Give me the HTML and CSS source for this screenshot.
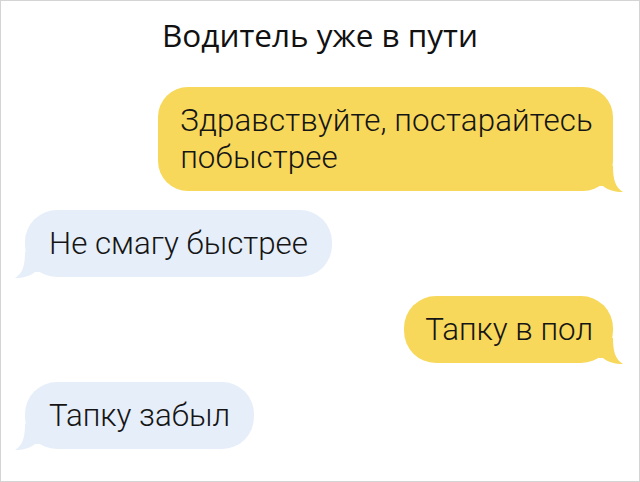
FILE: index.html
```html
<!DOCTYPE html>
<html lang="ru">
<head>
<meta charset="utf-8">
<link rel="stylesheet" href="styles.css">
</head>
<body>
<div class="frame">
  <h1 class="title">Водитель уже в пути</h1>
  <div class="chat">
    <div class="msg msg--out msg--wide">Здравствуйте, постарайтесь<br>побыстрее</div>
    <div class="msg msg--in">Не смагу быстрее</div>
    <div class="msg msg--out">Тапку в пол</div>
    <div class="msg msg--in">Тапку забыл</div>
  </div>
</div>
</body>
</html>
```
FILE: styles.css
```css
html, body {
  margin: 0;
  padding: 0;
  background: #fff;
}
.frame {
  box-sizing: border-box;
  width: 640px;
  height: 482px;
  border: 1px solid #d4d4d4;
  display: flex;
  flex-direction: column;
  overflow: hidden;
}
.title {
  margin: 0;
  padding-top: 13px;
  text-align: center;
  font-family: "Open Sans", sans-serif;
  font-weight: 500;
  font-size: 31.5px;
  line-height: 42px;
  color: #111;
}
.chat {
  display: flex;
  flex-direction: column;
  gap: 19px;
  padding: 31px 26px 0 24px;
}
.msg {
  position: relative;
  font-family: Roboto, sans-serif;
  font-weight: 300;
  font-size: 31.3px;
  line-height: 37px;
  color: #151515;
  padding: 15px 20px 15px 21px;
  border-radius: 32px;
}
.msg--out {
  align-self: flex-end;
  background: #f7d85b;
}
.msg--wide {
  padding-left: 22px;
  letter-spacing: 0.12px;
  border-radius: 30px;
}
.msg--in {
  align-self: flex-start;
  background: #e6eef9;
  padding-left: 24px;
  padding-right: 24px;
}
.msg::after {
  content: "";
  position: absolute;
  bottom: -1px;
  width: 24px;
  height: 26px;
  background: inherit;
}
.msg--out::after {
  right: -10px;
  clip-path: path("M0 0 L14 0 C14 13 16 21 24 26 C16 26 9 24 4 20 L0 20 Z");
}
.msg--in::after {
  left: -10px;
  clip-path: path("M24 0 L10 0 C10 13 8 21 0 26 C8 26 15 24 20 20 L24 20 Z");
}
```
